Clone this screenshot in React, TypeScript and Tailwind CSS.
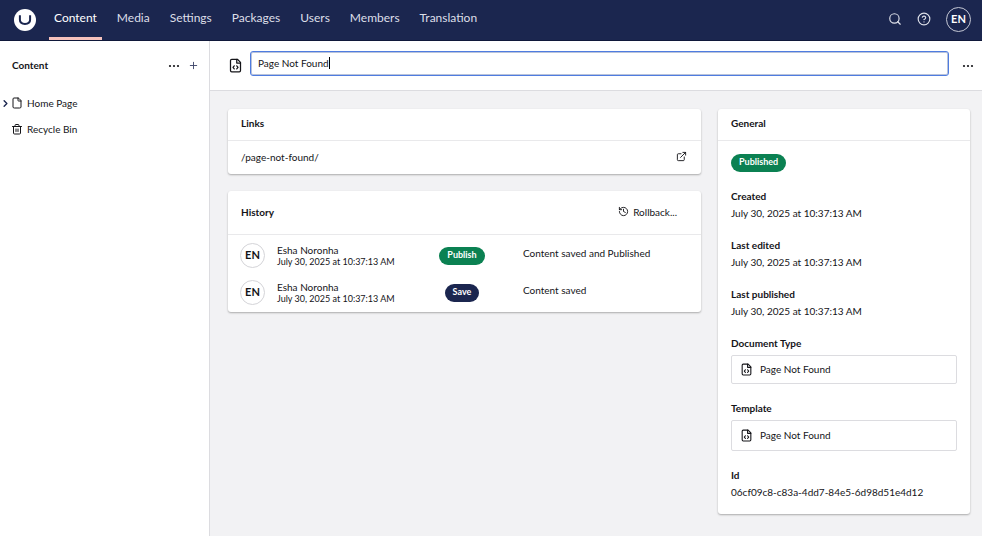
import type { ReactNode } from "react";
import {
  ChevronRight,
  CircleHelp,
  ExternalLink,
  File,
  History,
  Plus,
  Search,
} from "lucide-react";

const sections = ["Content", "Media", "Settings", "Packages", "Users", "Members", "Translation"];

const history = [
  { action: "Publish", tone: "bg-[#0b8152]", note: "Content saved and Published" },
  { action: "Save", tone: "bg-[#1b264f]", note: "Content saved" },
];

const dates = ["Created", "Last edited", "Last published"];
const stamp = "July 30, 2025 at 10:37:13 AM";

function Logo() {
  return (
    <svg viewBox="0 0 22 22" className="size-[22px]" aria-hidden="true">
      <circle cx="11" cy="11" r="11" fill="#fff" />
      <path
        d="M5.900 6.200V10.800c0 2.800 1.200 4.100 5.100 4.100s5.100-1.300 5.100-4.100V6.200"
        fill="none"
        stroke="#1b264f"
        strokeWidth="2"
      />
    </svg>
  );
}

function DocumentCode({ className }: { className: string }) {
  return (
    <svg
      viewBox="0 0 24 24"
      className={className}
      fill="none"
      stroke="currentColor"
      strokeWidth="2"
      strokeLinecap="round"
      strokeLinejoin="round"
      aria-hidden="true"
    >
      <path d="M15 2H6a2 2 0 0 0-2 2v16a2 2 0 0 0 2 2h12a2 2 0 0 0 2-2V7Z" />
      <path d="M14 2v6h6" />
      <path d="m10 12.500-2 2.500 2 2.500" />
      <path d="m14 12.500 2 2.500-2 2.500" />
    </svg>
  );
}

function TrashIcon() {
  return (
    <svg
      viewBox="0 0 24 24"
      className="size-3"
      fill="none"
      stroke="currentColor"
      strokeWidth="2"
      strokeLinecap="round"
      strokeLinejoin="round"
      aria-hidden="true"
    >
      <path d="M3 7h18M8 7V5a2 2 0 0 1 2-2h4a2 2 0 0 1 2 2v2" />
      <path d="M5 7v13a2 2 0 0 0 2 2h10a2 2 0 0 0 2-2V7" />
      <path d="M10 12v5M14 12v5" />
    </svg>
  );
}

function Dots() {
  return (
    <svg viewBox="0 0 12 4" className="h-1 w-3" fill="currentColor" aria-hidden="true">
      <circle cx="2" cy="2" r="1.100" />
      <circle cx="6" cy="2" r="1.100" />
      <circle cx="10" cy="2" r="1.100" />
    </svg>
  );
}

function Card({ title, header, children }: { title: string; header?: ReactNode; children: ReactNode }) {
  return (
    <section className="rounded-[3px] bg-white shadow-[0_1px_2px_rgba(0,0,0,0.3)]">
      <div
        className={`flex items-center justify-between border-b border-[#e9e9eb] pl-[13px] pr-6 ${
          header ? "h-11 pb-0.5" : "h-8 pb-1"
        }`}
      >
        <h2 className="font-bold">{title}</h2>
        {header}
      </div>
      {children}
    </section>
  );
}

function Tag({ tone, children }: { tone: string; children: ReactNode }) {
  return (
    <span
      className={`inline-flex h-[18px] items-center rounded-full px-2 pb-0.5 text-[9px] font-bold text-white ${tone}`}
    >
      {children}
    </span>
  );
}

function Reference({ label, height }: { label: string; height: string }) {
  return (
    <div>
      <h3 className="font-bold leading-[17px]">{label}</h3>
      <button
        type="button"
        className={`mt-[3px] flex w-full items-center gap-[7px] rounded-[2px] border border-[#dcdce0] px-2 text-left ${height}`}
      >
        <DocumentCode className="size-[13px]" />
        <span className="pb-0.5">Page Not Found</span>
      </button>
    </div>
  );
}

export default function App() {
  return (
    <div className="flex min-h-screen flex-col border-r-2 border-white bg-white font-['Lato','Liberation_Sans',sans-serif] text-[10px] leading-4 text-[#141418]">
      <header className="flex h-[41px] items-center justify-between border-b border-[#10183a] bg-[#1b264f] pl-3.5 pr-[11px] text-white">
        <div className="flex h-full items-center gap-[13px]">
          <a href="#home" aria-label="Home">
            <Logo />
          </a>
          <nav className="flex h-full gap-2.5 text-[12px]">
            {sections.map((name, i) => (
              <a
                key={name}
                href={`#${name.toLowerCase()}`}
                className={`flex h-full items-center px-[5px] pb-1 ${
                  i === 0 ? "shadow-[inset_0_-3px_0_#f5c1bc]" : "text-[#dddfe8]"
                }`}
              >
                {name}
              </a>
            ))}
          </nav>
        </div>
        <div className="flex items-center gap-[15px] pb-0.5 text-[#dddfe8]">
          <button type="button" aria-label="Search">
            <Search className="size-3.5" />
          </button>
          <button type="button" aria-label="Help">
            <CircleHelp className="size-3.5" />
          </button>
          <button
            type="button"
            className="flex size-[25px] items-center justify-center rounded-full border border-[#c4c7d4] pb-px text-[11px] font-bold text-white"
          >
            EN
          </button>
        </div>
      </header>

      <div className="flex grow">
        <aside className="w-[210px] shrink-0 border-r border-[#dcdce0]">
          <div className="flex h-[49px] items-center justify-between pl-3 pr-2.5">
            <h2 className="pb-0.5 font-bold">Content</h2>
            <div className="flex items-center gap-2">
              <button type="button" aria-label="Content actions">
                <Dots />
              </button>
              <button type="button" aria-label="Create content" className="text-[#3c4468]">
                <Plus className="size-[11px]" />
              </button>
            </div>
          </div>
          <ul>
            <li className="flex h-[26px] items-center">
              <button type="button" aria-label="Expand Home Page" className="text-[#1b264f]">
                <ChevronRight className="size-[11px]" strokeWidth={3} />
              </button>
              <a href="#home-page" className="flex items-center gap-1">
                <File className="size-3" />
                Home Page
              </a>
            </li>
            <li className="flex h-[26px] items-center pl-[11px]">
              <a href="#recycle-bin" className="flex items-center gap-1">
                <TrashIcon />
                Recycle Bin
              </a>
            </li>
          </ul>
        </aside>

        <main className="flex grow flex-col bg-[#f2f2f4]">
          <div className="flex h-[50px] items-center border-b border-[#dcdce0] bg-white pl-[18px] pr-2">
            <DocumentCode className="size-[15px] shrink-0" />
            <div className="relative mb-1 ml-[7px] mr-[13px] flex min-w-0 grow">
              <input
                aria-label="Name"
                autoFocus
                defaultValue="Page Not Found"
                className="h-[25px] w-full rounded-[3px] border border-[#4f7ce0] px-[7px] pb-0.5 caret-transparent outline-none ring-1 ring-inset ring-[#b9c3da]"
              />
              <span className="absolute left-[79px] top-1.5 h-3 w-px bg-black" aria-hidden="true" />
            </div>
            <button type="button" aria-label="Document actions">
              <Dots />
            </button>
          </div>

          <div className="flex items-start gap-[17px] py-[18px] pl-[18px] pr-3">
            <div className="flex min-w-0 grow flex-col gap-[17px]">
              <Card title="Links">
                <a
                  href="#page-not-found"
                  className="flex h-[33px] items-center justify-between pb-0.5 pl-[13px] pr-3.5"
                >
                  /page-not-found/
                  <ExternalLink className="size-[11px]" />
                </a>
              </Card>

              <Card
                title="History"
                header={
                  <button type="button" className="flex items-center gap-1">
                    <History className="size-[11px]" />
                    Rollback...
                  </button>
                }
              >
                <ul className="pb-px pt-0.5">
                  {history.map((entry) => (
                    <li key={entry.action} className="flex h-[37px] items-center pl-3">
                      <span className="flex size-[25px] items-center justify-center rounded-full border border-[#d4d4d8] pb-px text-[11px] font-bold">
                        EN
                      </span>
                      <div className="ml-3 w-[135px]">
                        <div className="leading-3">Esha Noronha</div>
                        <div className="text-[9px] leading-3">{stamp}</div>
                      </div>
                      <div className="flex w-[100px] justify-center">
                        <Tag tone={entry.tone}>{entry.action}</Tag>
                      </div>
                      <div className="ml-[11px] pb-1.5">{entry.note}</div>
                    </li>
                  ))}
                </ul>
              </Card>
            </div>

            <div className="w-[252px] shrink-0">
              <Card title="General">
                <div className="flex flex-col gap-4 px-[13px] pb-3.5 pt-[13px]">
                  <div className="flex">
                    <Tag tone="bg-[#0b8152]">Published</Tag>
                  </div>
                  {dates.map((label) => (
                    <div key={label}>
                      <h3 className="font-bold leading-[17px]">{label}</h3>
                      <p>{stamp}</p>
                    </div>
                  ))}
                  <Reference label="Document Type" height="h-[29px]" />
                  <Reference label="Template" height="h-[31px]" />
                  <div>
                    <h3 className="font-bold leading-[17px]">Id</h3>
                    <p>06cf09c8-c83a-4dd7-84e5-6d98d51e4d12</p>
                  </div>
                </div>
              </Card>
            </div>
          </div>
        </main>
      </div>
    </div>
  );
}
